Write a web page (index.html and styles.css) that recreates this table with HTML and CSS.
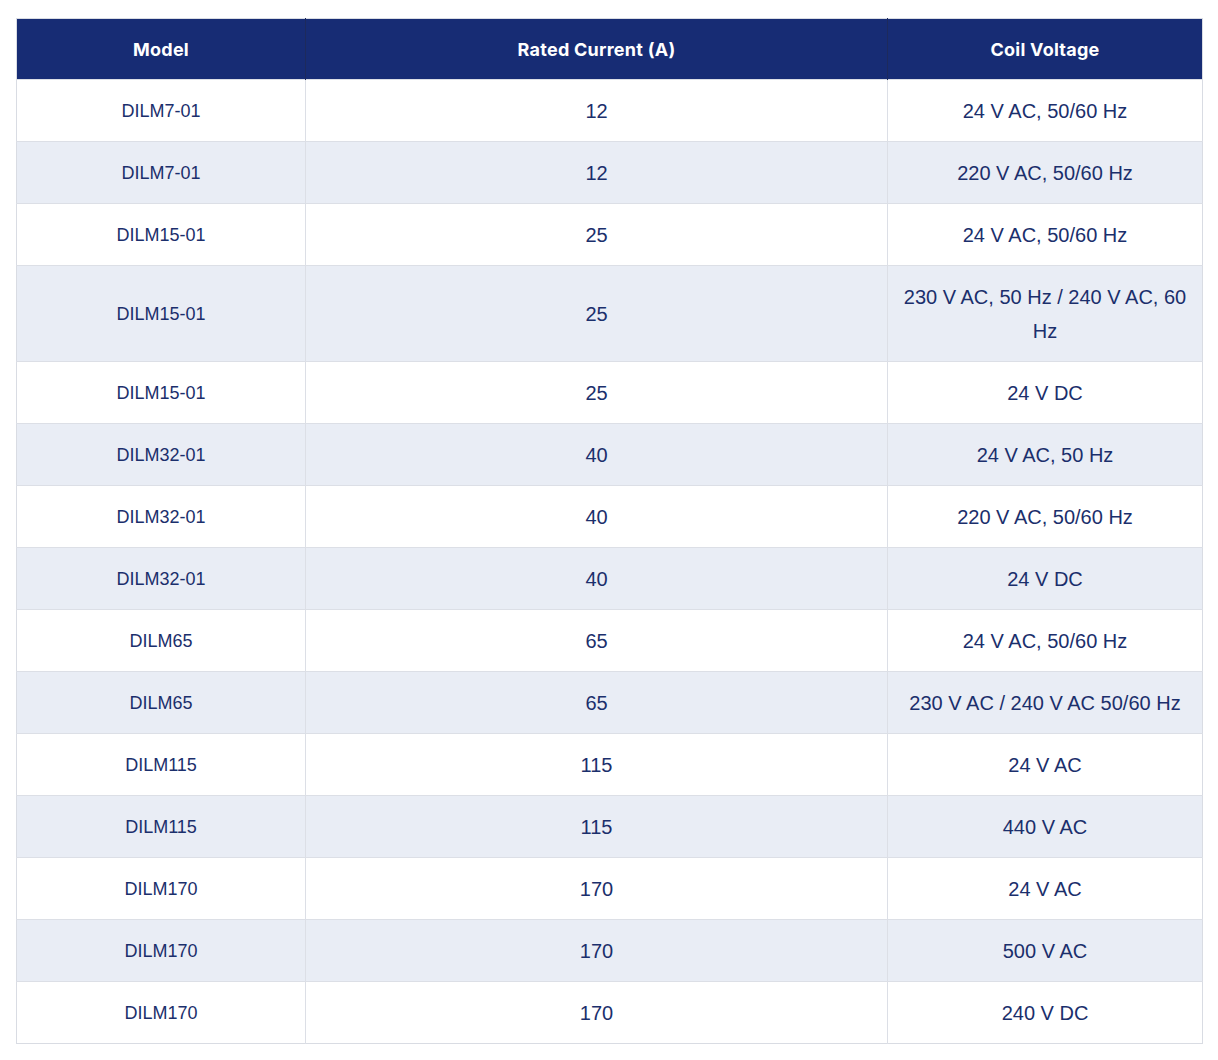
FILE: index.html
```html
<!DOCTYPE html>
<html lang="en">
<head>
<meta charset="utf-8">
<title>Contactors</title>
<link rel="stylesheet" href="styles.css">
</head>
<body>
<div class="wrap">
<table class="spec">
  <colgroup>
    <col class="c-model">
    <col class="c-current">
    <col class="c-coil">
  </colgroup>
  <thead>
    <tr><th>Model</th><th>Rated Current (A)</th><th>Coil Voltage</th></tr>
  </thead>
  <tbody>
    <tr><td class="model">DILM7-01</td><td>12</td><td>24 V AC, 50/60 Hz</td></tr>
    <tr><td class="model">DILM7-01</td><td>12</td><td>220 V AC, 50/60 Hz</td></tr>
    <tr><td class="model">DILM15-01</td><td>25</td><td>24 V AC, 50/60 Hz</td></tr>
    <tr><td class="model">DILM15-01</td><td>25</td><td>230 V AC, 50 Hz / 240 V AC, 60 Hz</td></tr>
    <tr><td class="model">DILM15-01</td><td>25</td><td>24 V DC</td></tr>
    <tr><td class="model">DILM32-01</td><td>40</td><td>24 V AC, 50 Hz</td></tr>
    <tr><td class="model">DILM32-01</td><td>40</td><td>220 V AC, 50/60 Hz</td></tr>
    <tr><td class="model">DILM32-01</td><td>40</td><td>24 V DC</td></tr>
    <tr><td class="model">DILM65</td><td>65</td><td>24 V AC, 50/60 Hz</td></tr>
    <tr><td class="model">DILM65</td><td>65</td><td>230 V AC / 240 V AC 50/60 Hz</td></tr>
    <tr><td class="model">DILM115</td><td>115</td><td>24 V AC</td></tr>
    <tr><td class="model">DILM115</td><td>115</td><td>440 V AC</td></tr>
    <tr><td class="model">DILM170</td><td>170</td><td>24 V AC</td></tr>
    <tr><td class="model">DILM170</td><td>170</td><td>500 V AC</td></tr>
    <tr><td class="model">DILM170</td><td>170</td><td>240 V DC</td></tr>
  </tbody>
</table>
</div>
</body>
</html>
```

FILE: styles.css
```css
html, body {
  margin: 0;
  padding: 0;
  background: #ffffff;
}

.wrap {
  padding: 18px 15px 16px 16px;
}

.spec {
  width: 100%;
  table-layout: fixed;
  border-collapse: collapse;
  border: 1px solid #d9dce3;
  font-family: "Liberation Sans", Arial, sans-serif;
  color: #1b2f6c;
}

.c-model { width: 289px; }
.c-current { width: 582px; }
.c-coil { width: auto; }

.spec th {
  background: #172c74;
  color: #ffffff;
  font-family: Inter, "Open Sans", sans-serif;
  font-weight: 700;
  font-size: 18px;
  letter-spacing: 0.25px;
  height: 60px;
  padding: 0 12px;
  text-align: center;
  vertical-align: middle;
  border-left: 1px solid #1d2a5c;
}

.spec th:first-child { border-left: none; }

.spec td {
  text-align: center;
  vertical-align: middle;
  font-size: 20px;
  line-height: 34px;
  padding: 14px 12px 13px;
  border-top: 1px solid #dcdfe6;
  border-left: 1px solid #dcdfe6;
}

.spec td:first-child { border-left: none; }

.spec td.model {
  font-size: 18px;
}

.spec tbody tr:nth-child(even) td {
  background: #e9edf5;
}
```
